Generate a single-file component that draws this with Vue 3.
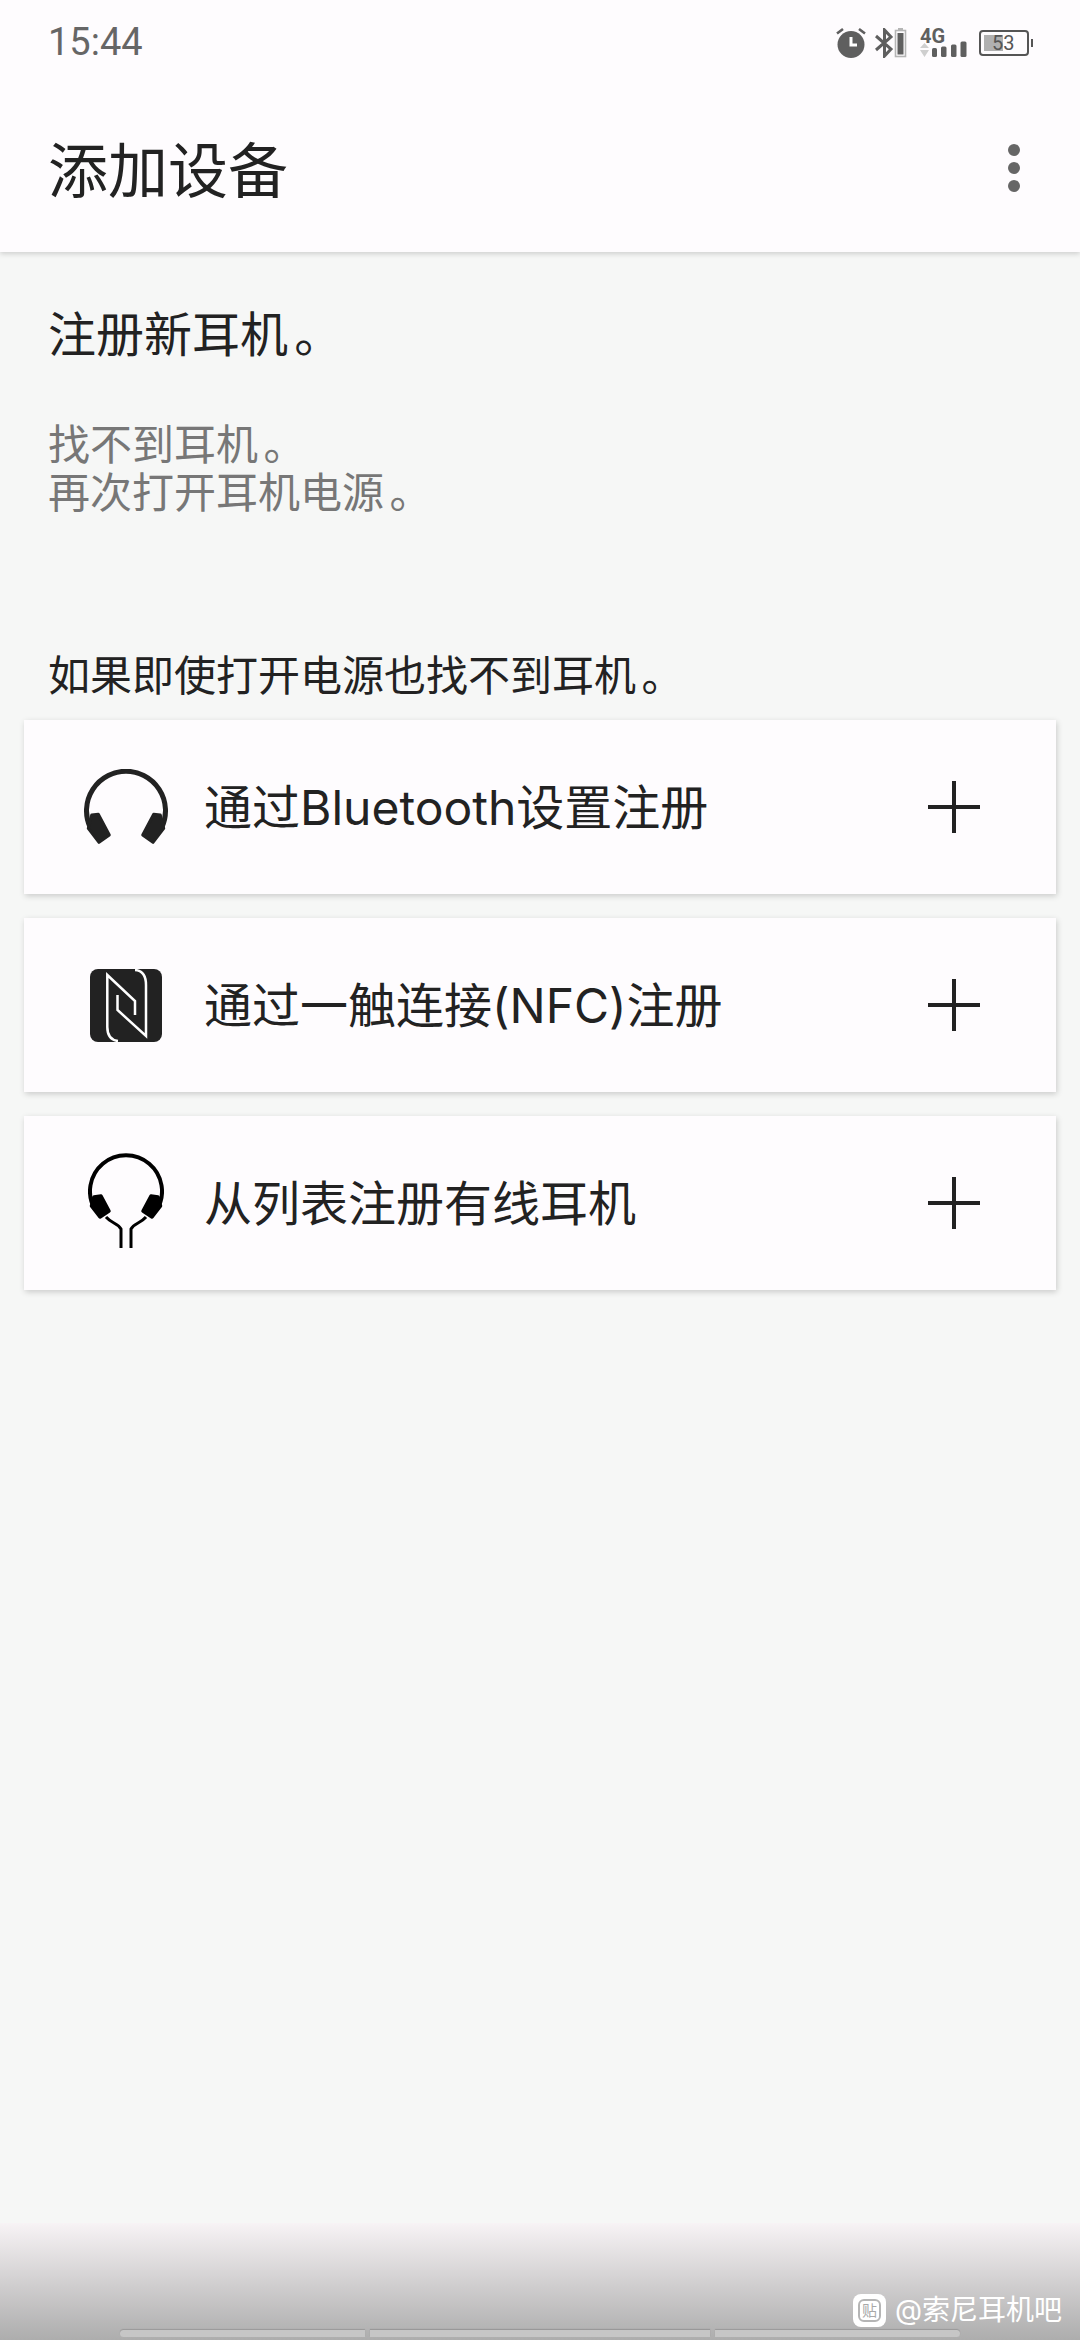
<template>
  <div class="page">
    <header class="appbar">
      <div class="status">
        <span class="time">15:44</span>
        <div class="status-icons">
          <svg width="32" height="32" viewBox="0 0 32 32">
            <circle cx="16" cy="17.500" r="13.5" fill="#5f5f5f" />
            <path d="M16 10V18H22" fill="none" stroke="#fff" stroke-width="3" />
            <path d="M2 6.500L8 2M30 6.500L24 2" stroke="#5f5f5f" stroke-width="2.6" />
          </svg>
          <svg width="34" height="30" viewBox="0 0 34 30">
            <path d="M1 8L16 21L9.5 28V2L16 9L1 22" fill="none" stroke="#5f5f5f" stroke-width="3" />
            <rect x="20.5" y="2.500" width="10" height="26" fill="none" stroke="#b5b5b5" stroke-width="1.6" />
            <rect x="22.500" y="5" width="6" height="21.5" fill="#5f5f5f" />
            <rect x="23" y="0" width="5" height="2" fill="#b5b5b5" />
          </svg>
          <div class="net">
            <span class="net-label">4G</span>
            <svg class="net-bars" width="48" height="30" viewBox="0 0 48 30">
              <path d="M4.500 15L9 20H0Z M4.500 29L0 22H9Z" fill="#cfcfcf" />
              <rect x="12" y="20" width="5" height="9" rx="1.5" fill="#5f5f5f" />
              <rect x="21" y="18.500" width="5.500" height="10.500" rx="1.5" fill="#5f5f5f" />
              <rect x="31" y="16.500" width="5.500" height="12.500" rx="1.5" fill="#5f5f5f" />
              <rect x="40.500" y="13.500" width="6" height="15.500" rx="1.5" fill="#5f5f5f" />
            </svg>
          </div>
          <div class="battery">
            <span class="battery-fill"></span>
            <span class="battery-text">53</span>
            <span class="battery-nub"></span>
          </div>
        </div>
      </div>
      <div class="titlebar">
        <h1 class="title">添加设备</h1>
        <div class="more">
          <span></span><span></span><span></span>
        </div>
      </div>
    </header>

    <main class="content">
      <p class="lead">注册新耳机<span class="stop">。</span></p>
      <p class="hint">找不到耳机<span class="stop">。</span><br />再次打开耳机电源<span class="stop">。</span></p>
      <p class="label">如果即使打开电源也找不到耳机<span class="stop">。</span></p>

      <div class="cards">
        <div class="card">
          <div class="card-icon">
            <svg width="84" height="76" viewBox="0 0 84 76">
              <path d="M6 58A39.5 39.5 0 1 1 78 58" fill="none" stroke="#222" stroke-width="5" />
              <path d="M7.700 46L14.300 45.300L25.300 66L15 73.300L4.300 59.300Z" fill="#222" stroke="#222" stroke-width="3" stroke-linejoin="round" />
              <path d="M76.300 46L69.700 45.300L58.700 66L69 73.300L79.700 59.300Z" fill="#222" stroke="#222" stroke-width="3" stroke-linejoin="round" />
            </svg>
          </div>
          <span class="card-text">通过Bluetooth设置注册</span>
          <span class="plus"></span>
        </div>

        <div class="card">
          <div class="card-icon">
            <svg width="72" height="73" viewBox="0 0 72 73">
              <rect width="72" height="73" rx="8" fill="#222" />
              <path d="M28 72C20 71 17.300 66 17.300 58V6L45 32V46" fill="none" stroke="#fff" stroke-width="2.500" />
              <path d="M45 1C53 1.500 56 8 56 16V67L27.500 41V26" fill="none" stroke="#fff" stroke-width="2.500" />
            </svg>
          </div>
          <span class="card-text">通过一触连接(NFC)注册</span>
          <span class="plus"></span>
        </div>

        <div class="card">
          <div class="card-icon wired">
            <svg width="76" height="98" viewBox="0 0 76 98">
              <path d="M7 59.600A36 36 0 1 1 69 59.600" fill="none" stroke="#000" stroke-width="4" />
              <path d="M6 47L13 46L21 61L12 67L3.500 56Z" fill="#000" stroke="#000" stroke-width="3.500" stroke-linejoin="round" />
              <path d="M70 47L63 46L55 61L64 67L72.500 56Z" fill="#000" stroke="#000" stroke-width="3.500" stroke-linejoin="round" />
              <path d="M18 67C24 74 30 73 33 79V98" fill="none" stroke="#000" stroke-width="3" />
              <path d="M58 67C52 74 46 73 43 79V98" fill="none" stroke="#000" stroke-width="3" />
            </svg>
          </div>
          <span class="card-text">从列表注册有线耳机</span>
          <span class="plus"></span>
        </div>
      </div>
    </main>

    <div class="fade">
      <div class="watermark">
        <span class="wm-logo"><span class="wm-mark">贴</span></span>
        <span class="wm-text">@索尼耳机吧</span>
      </div>
      <div class="navbars">
        <span class="navbar a"></span>
        <span class="navbar b"></span>
        <span class="navbar c"></span>
      </div>
    </div>
  </div>
</template>

<script setup>
</script>

<style>
html, body { margin: 0; background: #f6f7f6; }
</style>

<style scoped>
.page {
  position: relative;
  width: 1080px;
  height: 2340px;
  overflow: hidden;
  background: #f6f7f6;
  font-family: Inter, "Noto Sans CJK SC", sans-serif;
  color: #222;
}
.appbar {
  height: 252px;
  background: #fefcfe;
  box-shadow: 0 2px 5px rgba(0, 0, 0, 0.16);
  position: relative;
}
.status {
  height: 84px;
  display: flex;
  align-items: center;
  justify-content: space-between;
  padding: 0 48px;
}
.time {
  font-family: Roboto, sans-serif;
  font-size: 38px;
  color: #666;
}
.status-icons {
  display: flex;
  align-items: center;
  gap: 8px;
  margin-top: 2px;
}
.net {
  position: relative;
  width: 48px;
  height: 30px;
  margin-left: 3px;
}
.net-bars { display: block; }
.net-label {
  position: absolute;
  left: 0;
  top: -2px;
  font-family: Roboto, sans-serif;
  font-weight: 700;
  font-size: 20px;
  line-height: 20px;
  color: #5f5f5f;
}
.battery {
  position: relative;
  width: 50px;
  height: 26px;
  box-sizing: border-box;
  border: 2px solid #555;
  border-radius: 4px;
  margin-left: 3px;
  margin-right: 3px;
}
.battery-fill {
  position: absolute;
  left: 3px;
  top: 3px;
  width: 19px;
  height: 16px;
  background: #b0b0b0;
}
.battery-text {
  position: absolute;
  left: 11px;
  top: -2px;
  font-family: Roboto, sans-serif;
  font-size: 20px;
  line-height: 26px;
  color: #555;
}
.battery-nub {
  position: absolute;
  right: -6px;
  top: 7px;
  width: 2px;
  height: 8px;
  background: #555;
}
.titlebar {
  height: 168px;
  display: flex;
  align-items: center;
  justify-content: space-between;
  padding: 0 60px 0 48px;
}
.title {
  margin: 6px 0 0;
  font-size: 60px;
  font-weight: 400;
  line-height: 80px;
}
.more {
  display: flex;
  flex-direction: column;
  gap: 6px;
}
.more span {
  width: 12px;
  height: 12px;
  border-radius: 50%;
  background: #666;
}
.content {
  padding-top: 59px;
}
.lead, .hint, .label {
  margin: 0;
  padding: 0 48px;
  line-height: 48px;
}
.lead { font-size: 48px; }
.hint {
  font-size: 42px;
  color: #777;
  margin-top: 62px;
}
.label {
  font-size: 42px;
  margin-top: 135px;
}
.stop { margin-left: 0.13em; }
.cards {
  display: flex;
  flex-direction: column;
  gap: 24px;
  margin: 20px 24px 0;
}
.card {
  height: 174px;
  display: flex;
  align-items: center;
  background: #fefcfe;
  box-shadow: 1px 2px 6px rgba(0, 0, 0, 0.18);
}
.card-icon {
  width: 180px;
  box-sizing: border-box;
  padding-left: 24px;
  display: flex;
  justify-content: center;
  flex: none;
}
.card-icon svg { display: block; }
.card-icon.wired { margin-bottom: 8px; }
.card-text {
  font-size: 48px;
  flex: 1;
  line-height: 60px;
  margin-top: 1px;
}
.plus {
  position: relative;
  width: 52px;
  height: 52px;
  margin-right: 76px;
  flex: none;
}
.plus::before, .plus::after {
  content: "";
  position: absolute;
  background: #222;
}
.plus::before { left: 0; right: 0; top: 24px; height: 4px; }
.plus::after { top: 0; bottom: 0; left: 24px; width: 4px; }
.fade {
  position: absolute;
  left: 0;
  right: 0;
  bottom: 0;
  height: 117px;
  background: linear-gradient(#f7f3f5, #adadad);
}
.watermark {
  position: absolute;
  right: 18px;
  bottom: 13px;
  display: flex;
  align-items: center;
  gap: 9px;
  color: #fff;
}
.wm-logo {
  position: relative;
  display: flex;
  align-items: center;
  justify-content: center;
  width: 33px;
  height: 33px;
  border-radius: 8px;
  background: #fff;
}
.wm-mark {
  box-sizing: border-box;
  width: 23px;
  height: 23px;
  border: 2px solid #b5b5b5;
  border-radius: 6px;
  color: #a8a8a8;
  font-size: 15px;
  line-height: 19px;
  text-align: center;
}
.wm-text {
  font-size: 28px;
  line-height: 34px;
}
.navbars {
  position: absolute;
  left: 120px;
  bottom: 3px;
  display: flex;
  gap: 5px;
}
.navbar {
  height: 7px;
  background: #c6c6c6;
  box-shadow: 0 -1px 1px rgba(0, 0, 0, 0.15);
}
.navbar.a { width: 245px; border-radius: 4px 0 0 4px; }
.navbar.b { width: 340px; }
.navbar.c { width: 245px; border-radius: 0 4px 4px 0; }
</style>
